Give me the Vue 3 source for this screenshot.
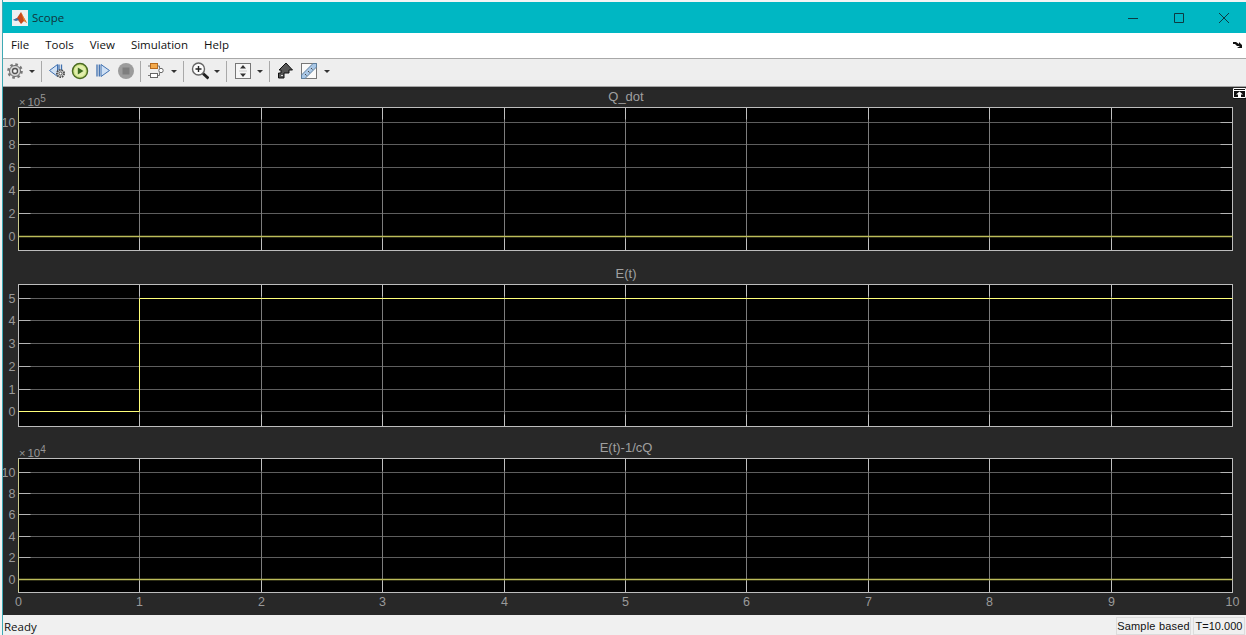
<template>
  <div class="window">
    <header class="titlebar">
      <svg class="app-icon" viewBox="0 0 16 16" width="16" height="16">
        <rect x="0" y="0" width="16" height="16" fill="#eef0f2" />
        <path d="M1 10 L5 8 L9 2 L11 6 L15 13 L12 11 L9 14 L6 10 Z" fill="#c9491d" />
        <path d="M1 10 L5 8 L7 10 L4 11 Z" fill="#3f6fa8" />
        <path d="M9 2 L11 6 L15 13 L12 11 Z" fill="#e8872a" />
      </svg>
      <span class="app-name">Scope</span>
      <div class="win-controls">
        <svg width="10" height="10" viewBox="0 0 10 10"><path d="M0 5.5H10" /></svg>
        <svg width="10" height="10" viewBox="0 0 10 10"><path d="M.5 .5H9.5V9.5H.5Z" /></svg>
        <svg width="10" height="10" viewBox="0 0 10 10"><path d="M0 0L10 10M10 0L0 10" /></svg>
      </div>
    </header>

    <nav class="menubar">
      <span v-for="item in menus" :key="item">{{ item }}</span>
      <svg class="menu-dock" width="9" height="8" viewBox="0 0 9 8">
        <path d="M0 1H3L6 3V1L9 4V7H4L7 5H4L2 3H0Z" fill="#111" />
      </svg>
    </nav>

    <div class="toolbar">
      <button class="tool gear-tool">
        <svg width="18" height="18" viewBox="0 0 18 18">
          <circle cx="9" cy="9" r="6.6" fill="none" stroke="#777" stroke-width="2.4" stroke-dasharray="2.6 2.6" />
          <circle cx="9" cy="9" r="5.5" fill="#d6d6d6" stroke="#6c6c6c" />
          <circle cx="9" cy="9" r="2.5" fill="#f4f4f4" stroke="#505050" stroke-width="1.3" />
        </svg>
      </button>
      <i class="caret caret-first"></i>
      <span class="sep"></span>

      <button class="tool">
        <svg width="22" height="20" viewBox="0 0 22 20">
          <path d="M3.5 9.5 L11.5 3.5 V15.5 Z" fill="#cfe0f4" stroke="#3f70b0" />
          <path d="M13 3.5V10M15.5 3.5V9" stroke="#3f70b0" stroke-width="1.3" fill="none" />
          <circle cx="14.5" cy="12.5" r="3.6" fill="#d4d4d4" stroke="#4c4c4c" stroke-width="1.8" stroke-dasharray="1.6 .9" />
          <circle cx="14.5" cy="12.5" r="1.5" fill="#fff" stroke="#333" stroke-width=".8" />
        </svg>
      </button>
      <button class="tool">
        <svg width="20" height="20" viewBox="0 0 20 20">
          <circle cx="10" cy="10" r="7.5" fill="#cfe487" stroke="#4a6a22" stroke-width="1.5" />
          <circle cx="10" cy="10" r="5.5" fill="#e3efae" />
          <path d="M7.8 6.5 L13.5 10 L7.8 13.5 Z" fill="#3c6a20" />
        </svg>
      </button>
      <button class="tool">
        <svg width="20" height="20" viewBox="0 0 20 20">
          <path d="M4 3.5V15.5M6.3 3.5V15.5" stroke="#3f70b0" stroke-width="1.3" fill="none" />
          <path d="M8 3.5 L16.5 9.5 L8 15.5 Z" fill="#cfe0f4" stroke="#3f70b0" />
        </svg>
      </button>
      <button class="tool">
        <svg width="20" height="20" viewBox="0 0 20 20">
          <circle cx="10" cy="10" r="8" fill="#9c9c9c" />
          <rect x="6.5" y="6.5" width="7" height="7" fill="#7e7e7e" />
        </svg>
      </button>
      <span class="sep"></span>

      <button class="tool">
        <svg width="22" height="20" viewBox="0 0 22 20">
          <rect x="5.5" y="2.5" width="7" height="5" fill="#f3a94b" stroke="#b86a1c" />
          <rect x="5.5" y="12.5" width="7" height="4" fill="#fff" stroke="#666" />
          <circle cx="16" cy="9.5" r="2.2" fill="#fff" stroke="#666" />
          <path d="M12.5 5H14.5V7.5M14.5 11.5V14.5H12.5M3 5H5.5M3 14.5H5.5" stroke="#777" fill="none" />
        </svg>
      </button>
      <i class="caret"></i>
      <span class="sep"></span>

      <button class="tool">
        <svg width="20" height="20" viewBox="0 0 20 20">
          <path d="M14 12.5L19.5 17.5" stroke="#222" stroke-width="3" />
          <circle cx="9.5" cy="8" r="6" fill="#fdfdfd" stroke="#666" stroke-width="1.4" />
          <path d="M6.5 8H12.5M9.5 5V11" stroke="#222" stroke-width="1.4" />
        </svg>
      </button>
      <i class="caret"></i>
      <span class="sep"></span>

      <button class="tool">
        <svg width="20" height="20" viewBox="0 0 20 20">
          <rect x="3.5" y="2.5" width="15" height="15" fill="#f6f6f6" stroke="#777" />
          <path d="M11 4L14 7.5H8ZM11 16L14 12.5H8Z" fill="#333" />
          <path d="M7 10H15" stroke="#ccc" />
        </svg>
      </button>
      <i class="caret"></i>
      <span class="sep"></span>

      <button class="tool">
        <svg width="20" height="20" viewBox="0 0 20 20">
          <path d="M11 2 L17.5 9 H14 V12 H9 V17 H3.5 V12 H6 V9 H4 Z" fill="#555" stroke="#111" />
          <path d="M6 14.5H8" stroke="#ddd" />
        </svg>
      </button>
      <button class="tool measure-tool">
        <svg width="20" height="20" viewBox="0 0 20 20">
          <rect x="2.5" y="2.5" width="15" height="15" fill="#fafafa" stroke="#777" />
          <path d="M2.5 14L14 2.5H17.5V6L6 17.5H2.5Z" fill="#a9c7e6" stroke="#5c7f9f" />
          <path d="M6 13L7.5 14.5M9 10L10.5 11.5M12 7L13.5 8.5" stroke="#4a4a4a" />
        </svg>
      </button>
      <i class="caret"></i>
    </div>

    <main class="figure">
      <section
        v-for="axes in plots"
        :key="axes.title"
        class="axes"
        :style="{ height: axes.panelHeight + 'px' }"
      >
        <div class="axes-title">
          <span v-if="axes.exponent" class="multiplier">
            <small>×</small>10<sup>{{ axes.exponent }}</sup>
          </span>
          <span class="title-text">{{ axes.title }}</span>
        </div>
        <svg class="plot" width="1243" :height="axes.svgHeight">
          <rect :x="left" y="0.5" :width="plotWidth" :height="axes.height" fill="#000" />
          <g v-for="tick in axes.yTicks" :key="tick.label">
            <path :d="`M${left} ${tick.y}H${right}`" stroke="#5e5e5e" />
            <path :d="`M${left} ${tick.y}h12M${right} ${tick.y}h-12`" stroke="#b4b4b4" />
            <text class="tick" :x="left - 3" :y="tick.y + 4.5" text-anchor="end">{{ tick.label }}</text>
          </g>
          <g v-for="x in gridX" :key="x">
            <path :d="`M${x} 0.5V${axes.height + 0.5}`" stroke="#7c7c7c" />
            <path :d="`M${x} 0.5v12M${x} ${axes.height + 0.5}v-12`" stroke="#c0c0c0" />
          </g>
          <rect
            :x="left"
            y="0.5"
            :width="plotWidth"
            :height="axes.height"
            fill="none"
            stroke="#bdbdbd"
          />
          <path :d="axes.signal" fill="none" :stroke="axes.signalColor" :stroke-width="axes.signalWidth" />
          <path
            v-if="axes.yellowSpine"
            :d="`M${left} 1V${axes.height}`"
            stroke="#c9c98c"
          />
          <template v-if="axes.xLabels">
            <text
              v-for="(x, i) in gridAll"
              :key="i"
              class="tick"
              :x="x"
              :y="axes.height + 13.5"
              text-anchor="middle"
            >{{ i }}</text>
          </template>
        </svg>
      </section>
      <button class="undock" aria-label="Undock">
        <svg width="13" height="11" viewBox="0 0 13 11">
          <path d="M.5 .5H12.5V9.5H.5ZM.5 2.5H12.5" fill="none" stroke="#fff" />
          <path d="M6.5 3.5L10 6.5H8V9H5V6.5H3Z" fill="#fff" />
        </svg>
      </button>
    </main>

    <footer class="statusbar">
      <span class="ready">Ready</span>
      <span class="cell sample">Sample based</span>
      <span class="cell time">T=10.000</span>
    </footer>
  </div>
</template>

<script setup>
const menus = ['File', 'Tools', 'View', 'Simulation', 'Help']

// everything in the plots is measured from the left edge of the figure
const left = 15.5
const right = 1229.5
const plotWidth = right - left
const step = plotWidth / 10
const gridAll = Array.from({ length: 11 }, (_, i) => Math.round(left + i * step - 0.5) + 0.5)
const gridX = gridAll.slice(1, 10)

const makeTicks = (labels, ys, top) =>
  labels.map((label, i) => ({ label, y: ys[i] - top + 0.5 }))

const plots = [
  {
    title: 'Q_dot',
    exponent: 5,
    panelHeight: 177,
    height: 143,
    svgHeight: 145,
    yTicks: makeTicks(['10', '8', '6', '4', '2', '0'], [122, 144, 167, 190, 213, 236], 107),
    signal: `M${left} 129.5H${right}`,
    signalColor: '#bcbc5a',
    signalWidth: 1.5,
    yellowSpine: true
  },
  {
    title: 'E(t)',
    panelHeight: 174,
    height: 142,
    svgHeight: 144,
    yTicks: makeTicks(['5', '4', '3', '2', '1', '0'], [298, 320, 343, 366, 389, 411], 284),
    signal: `M${left} 127.5H${gridAll[1]}V14.5H${right}`,
    signalColor: '#ffff7a',
    signalWidth: 1,
    yellowSpine: false
  },
  {
    title: 'E(t)-1/cQ',
    exponent: 4,
    panelHeight: 177,
    height: 134,
    svgHeight: 157,
    yTicks: makeTicks(['10', '8', '6', '4', '2', '0'], [472, 493, 514, 536, 557, 579], 458),
    signal: `M${left} 121.5H${right}`,
    signalColor: '#bcbc5a',
    signalWidth: 1.5,
    yellowSpine: true,
    xLabels: true
  }
]
</script>

<style>
body {
  background: #f4f4f4;
}
</style>

<style scoped>
.window {
  display: flex;
  flex-direction: column;
  height: 635px;
  box-sizing: border-box;
  margin-left: 2px;
  padding-top: 2px;
  border-left: 1px solid #3fa9b4;
  overflow: hidden;
  font-family: "Open Sans", "Noto Sans", sans-serif;
  font-size: 11.5px;
  color: #111;
}

.titlebar {
  display: flex;
  align-items: center;
  flex: 0 0 31px;
  padding-left: 9px;
  background: #00b7c3;
}

.app-icon {
  margin-right: 4px;
}

.app-name {
  font-size: 11.5px;
  color: #10343a;
}

.win-controls {
  display: flex;
  gap: 35.5px;
  margin-left: auto;
  margin-right: 17px;
}

.win-controls svg {
  fill: none;
  stroke: #0d3a42;
}

.menubar {
  display: flex;
  align-items: center;
  gap: 16px;
  flex: 0 0 25px;
  box-sizing: border-box;
  padding: 0 0 2px 8px;
  background: #fff;
  border-bottom: 1px solid #a8a8a8;
  flex-basis: 26px;
}

.menu-dock {
  margin-left: auto;
  margin-right: 4px;
}

.toolbar {
  display: flex;
  align-items: center;
  flex: 0 0 24px;
  padding: 0 0 3px 2px;
  background: #eeeeee;
  border-bottom: 1px solid #a4a4a4;
}

.tool {
  display: flex;
  align-items: center;
  justify-content: center;
  width: 23px;
  height: 22px;
  padding: 0;
  border: 0;
  background: none;
}

.gear-tool {
  width: 20px;
}

.measure-tool {
  margin-left: 1px;
}

.caret {
  width: 0;
  height: 0;
  margin: 0 3px 0 4px;
  border-left: 3px solid transparent;
  border-right: 3px solid transparent;
  border-top: 3px solid #333;
}

.caret-first {
  margin-right: 3px;
}

.sep {
  width: 1px;
  height: 21px;
  margin: 0 3px;
  background: #a9a9a9;
}

.figure {
  position: relative;
  flex: 1;
  background: #282828;
}

.axes-title {
  position: relative;
  height: 20px;
  font-family: "Liberation Sans", Arial, sans-serif;
  font-size: 13px;
  line-height: 20px;
  color: #a0a0a0;
  text-align: center;
}

.title-text {
  display: block;
  margin-left: 3px;
}

.multiplier {
  position: absolute;
  left: 16px;
  top: 8px;
  font-size: 11.5px;
  line-height: 14px;
  color: #969696;
}

.multiplier small {
  font-size: 11px;
  margin-right: 2px;
}

.multiplier sup {
  font-size: 10px;
  line-height: 0;
  vertical-align: 4px;
}

.plot {
  display: block;
}

.tick {
  font-family: "Liberation Sans", Arial, sans-serif;
  font-size: 12.5px;
  fill: #9a9a9a;
}

.undock {
  position: absolute;
  top: 1px;
  right: 0;
  display: flex;
  width: 13px;
  height: 11px;
  padding: 0;
  border: 0;
  background: #111;
}

.statusbar {
  display: flex;
  align-items: center;
  flex: 0 0 20px;
  padding: 1px 1px 0;
  box-sizing: border-box;
  background: #f0f0f0;
  font-size: 11.5px;
}

.ready {
  margin-right: auto;
  padding-top: 1px;
}

.cell {
  display: flex;
  align-items: center;
  justify-content: center;
  height: 18px;
  box-sizing: border-box;
  border: 1px solid #dcdcdc;
  font-family: "Liberation Sans", Arial, sans-serif;
  font-size: 11px;
  white-space: nowrap;
}

.sample {
  width: 75px;
  margin-right: 2px;
  letter-spacing: .2px;
}

.time {
  width: 52px;
}
</style>
